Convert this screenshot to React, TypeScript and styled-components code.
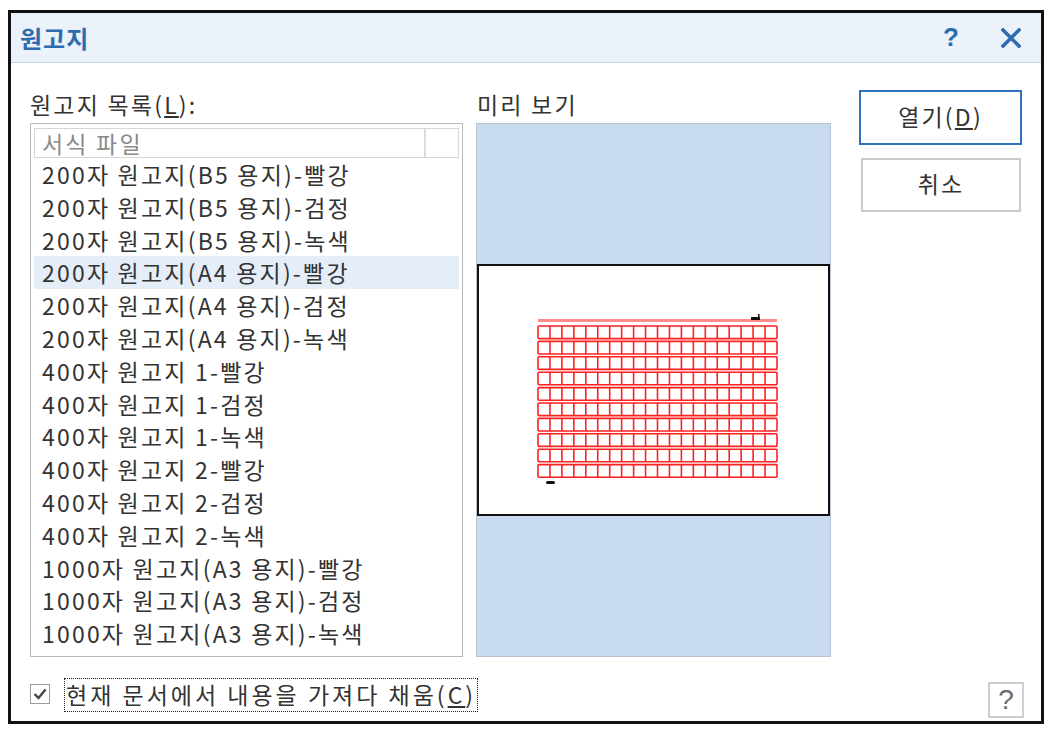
import styled, { createGlobalStyle } from "styled-components";

const GlobalStyle = createGlobalStyle`
  html, body {
    margin: 0;
    padding: 0;
    background: #fff;
  }
  body {
    font-family: "Noto Sans CJK KR", "Noto Sans", sans-serif;
    color: #333;
  }
`;

const Frame = styled.div`
  box-sizing: border-box;
  width: 1036px;
  height: 714px;
  margin: 10px 0 0 8px;
  border: 3px solid #111;
  display: flex;
  flex-direction: column;
  background: #fff;
`;

const TitleBar = styled.div`
  height: 49px;
  flex-shrink: 0;
  display: flex;
  align-items: center;
  padding: 0 20px 0 9px;
  background: #ebf2f9;
  border-bottom: 1px solid #c3d7ea;

  .title {
    flex: 1;
    color: #2e6cb0;
    font-size: 24px;
    font-weight: 700;
    letter-spacing: 1px;
  }

  .help {
    color: #2e6cb0;
    font-family: "Liberation Sans", sans-serif;
    font-size: 26px;
    font-weight: 700;
    margin-right: 42px;
  }
`;

const Body = styled.div`
  flex: 1;
  display: flex;
  flex-direction: column;
  padding: 22px 0 0 19px;
  font-size: 23px;
  letter-spacing: 2.2px;
`;

const MainRow = styled.div`
  display: flex;
`;

const Column = styled.div<{ $width: number; $gap: number }>`
  width: ${(p) => p.$width}px;
  margin-right: ${(p) => p.$gap}px;
  display: flex;
  flex-direction: column;
`;

const Label = styled.div`
  height: 38px;
  line-height: 38px;
  white-space: nowrap;
`;

const ListBox = styled.div`
  box-sizing: border-box;
  height: 534px;
  border: 1px solid #b9b9b9;
  padding: 4px 3px;
`;

const HeaderRow = styled.div`
  box-sizing: border-box;
  height: 30px;
  display: flex;
  border: 1px solid #d6d6d6;
  color: #8a8a8a;

  .name {
    flex: 1;
    padding-left: 7px;
    line-height: 28px;
  }

  .side {
    width: 32px;
    border-left: 2px solid #dcdcdc;
  }
`;

const ListRow = styled.div<{ $selected?: boolean }>`
  height: 32.8px;
  line-height: 32.8px;
  padding-left: 8px;
  white-space: nowrap;
  background: ${(p) => (p.$selected ? "#e5eef8" : "transparent")};
`;

const Preview = styled.div`
  box-sizing: border-box;
  height: 534px;
  border: 1px solid #b7c3cf;
  background: #c8dbf0;
  display: flex;
  align-items: center;
  margin: 0 -1px;
`;

const Page = styled.div`
  box-sizing: border-box;
  width: 100%;
  height: 252px;
  border: 2px solid #111;
  background: #fff;

  svg {
    display: block;
  }
`;

const Buttons = styled.div`
  display: flex;
  flex-direction: column;
  padding-top: 5px;
`;

const Button = styled.div<{ $primary?: boolean }>`
  box-sizing: border-box;
  display: flex;
  align-items: center;
  justify-content: center;
  width: ${(p) => (p.$primary ? 163 : 160)}px;
  height: ${(p) => (p.$primary ? 55 : 54)}px;
  margin: ${(p) => (p.$primary ? "0 0 13px 0" : "0 0 0 2px")};
  border: 2px solid ${(p) => (p.$primary ? "#2f72bf" : "#cbcbcb")};
  background: #fff;
  padding-bottom: 4px;
`;

const BottomRow = styled.div`
  display: flex;
  align-items: flex-start;
  margin-top: 21px;
  margin-right: 17px;
`;

const CheckBox = styled.div`
  box-sizing: border-box;
  width: 20px;
  height: 20px;
  margin-top: 6px;
  margin-right: 14px;
  border: 1px solid #9a9a9a;
  display: flex;
  align-items: center;
  justify-content: center;
`;

const CheckLabel = styled.div`
  box-sizing: border-box;
  height: 34px;
  line-height: 30px;
  padding: 0 1px 0 1px;
  border: 1px dotted #222;
  white-space: nowrap;
  letter-spacing: 3px;
`;

const Spacer = styled.div`
  flex: 1;
`;

const HelpButton = styled.div`
  box-sizing: border-box;
  width: 36px;
  height: 36px;
  margin-top: 4px;
  border: 2px solid #cfcfcf;
  display: flex;
  align-items: center;
  justify-content: center;
  color: #6a6a6a;
  font-family: "Liberation Sans", sans-serif;
  font-size: 28px;
  letter-spacing: 0;
`;

const items = [
  "200자 원고지(B5 용지)-빨강",
  "200자 원고지(B5 용지)-검정",
  "200자 원고지(B5 용지)-녹색",
  "200자 원고지(A4 용지)-빨강",
  "200자 원고지(A4 용지)-검정",
  "200자 원고지(A4 용지)-녹색",
  "400자 원고지 1-빨강",
  "400자 원고지 1-검정",
  "400자 원고지 1-녹색",
  "400자 원고지 2-빨강",
  "400자 원고지 2-검정",
  "400자 원고지 2-녹색",
  "1000자 원고지(A3 용지)-빨강",
  "1000자 원고지(A3 용지)-검정",
  "1000자 원고지(A3 용지)-녹색",
];

// 200자 원고지 미리 보기 (20칸 x 10줄)
const GridPreview = () => {
  const x0 = 59;
  const w = 239;
  const top = 60;
  const rowH = 15.4;
  const cellH = 12.6;
  const cols = 20;
  const rows = 10;
  const lines = [];
  for (let r = 0; r < rows; r++) {
    const y = top + r * rowH;
    lines.push(
      <rect key={"r" + r} x={x0} y={y} width={w} height={cellH} rx={1} fill="none" stroke="#ff2020" strokeWidth={1.6} />
    );
    for (let c = 1; c < cols; c++) {
      const x = x0 + (w / cols) * c;
      lines.push(<line key={"c" + r + "-" + c} x1={x} y1={y} x2={x} y2={y + cellH} stroke="#ff2020" strokeWidth={1.6} />);
    }
  }
  return (
    <svg width="349" height="248" viewBox="0 0 349 248">
      <rect x={x0} y={53} width={w} height={3} fill="#ff8a8a" />
      <rect x={272} y={51} width={9} height={3} fill="#111" />
      <rect x={279} y={48} width={1.5} height={6} fill="#111" />
      <rect x={67} y={215} width={9} height={3} rx={1.5} fill="#111" />
      {lines}
    </svg>
  );
};

const App = () => {
  return (
    <>
      <GlobalStyle />
      <Frame>
        <TitleBar>
          <span className="title">원고지</span>
          <span className="help">?</span>
          <svg width="20" height="20" viewBox="0 0 20 20">
            <path d="M2 2 L18 18 M18 2 L2 18" stroke="#2e6cb0" strokeWidth="3.6" strokeLinecap="square" />
          </svg>
        </TitleBar>

        <Body>
          <MainRow>
            <Column $width={433} $gap={14}>
              <Label>
                원고지 목록(<u>L</u>):
              </Label>
              <ListBox>
                <HeaderRow>
                  <span className="name">서식 파일</span>
                  <span className="side" />
                </HeaderRow>
                {items.map((item, i) => (
                  <ListRow key={item} $selected={i === 3}>
                    {item}
                  </ListRow>
                ))}
              </ListBox>
            </Column>

            <Column $width={353} $gap={29}>
              <Label>미리 보기</Label>
              <Preview>
                <Page>
                  <GridPreview />
                </Page>
              </Preview>
            </Column>

            <Buttons>
              <Button $primary>
                열기(<u>D</u>)
              </Button>
              <Button>취소</Button>
            </Buttons>
          </MainRow>

          <BottomRow>
            <CheckBox>
              <svg width="14" height="12" viewBox="0 0 14 12">
                <path d="M1.5 6 L5.5 10 L12.5 1.5" fill="none" stroke="#444" strokeWidth="2.4" />
              </svg>
            </CheckBox>
            <CheckLabel>
              현재 문서에서 내용을 가져다 채움(<u>C</u>)
            </CheckLabel>
            <Spacer />
            <HelpButton>?</HelpButton>
          </BottomRow>
        </Body>
      </Frame>
    </>
  );
};

export default App;
